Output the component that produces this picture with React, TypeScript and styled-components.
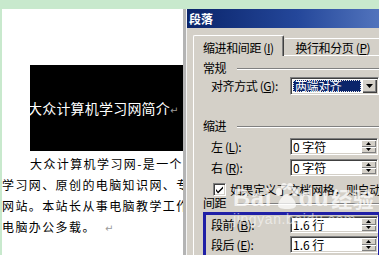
import styled, { createGlobalStyle } from 'styled-components';

const GlobalStyle = createGlobalStyle`
  html, body { margin: 0; padding: 0; background: #fff; }
`;

const cjk = `"Noto Sans CJK SC", "DejaVu Sans", sans-serif`;

const App = () => {
  return (
    <Screen>
      <GlobalStyle />
      <Main>
        <Doc>
          <Banner>
            <BannerTitle>
              大众计算机学习网简介<Mark>↵</Mark>
            </BannerTitle>
          </Banner>
          <Body>
            <Line indent>大众计算机学习网-是一个</Line>
            <Line>学习网、原创的电脑知识网、专</Line>
            <Line>网站。本站长从事电脑教学工作</Line>
            <Line>
              电脑办公多载。<Mark>&nbsp;&nbsp;↵</Mark>
            </Line>
          </Body>
        </Doc>
        <Divider />
        <Dialog>
          <TitleBar>段落</TitleBar>
          <DialogBody>
            <TabRow>
              <Tab active>
                缩进和间距 (<u>I</u>)
              </Tab>
              <Tab>
                换行和分页 (<u>P</u>)
              </Tab>
            </TabRow>
            <Panel>
              <GroupHeader>
                <span>常规</span>
                <Etch />
              </GroupHeader>
              <Row top={2}>
                <Label>
                  对齐方式 (<u>G</u>):
                </Label>
                <Combo>
                  <ComboValue>
                    <Focus>两端对齐</Focus>
                  </ComboValue>
                  <ComboButton>
                    <svg width="7" height="4" viewBox="0 0 7 4">
                      <path d="M0 0h7L3.5 4z" fill="#000" />
                    </svg>
                  </ComboButton>
                </Combo>
              </Row>
              <GroupHeader top={24}>
                <span>缩进</span>
                <Etch />
              </GroupHeader>
              <Row top={5}>
                <Label>
                  左 (<u>L</u>):
                </Label>
                <Spin value="0 字符" />
              </Row>
              <Row top={4}>
                <Label>
                  右 (<u>R</u>):
                </Label>
                <Spin value="0 字符" />
              </Row>
              <CheckRow>
                <CheckBox>
                  <svg width="9" height="9" viewBox="0 0 9 9">
                    <path d="M1 4l2 2.5L8 1.5v2L3 8.5 1 6z" fill="#000" />
                  </svg>
                </CheckBox>
                如果定义了文档网格，则自动调整右缩进
              </CheckRow>
              <GroupHeader>
                <span>间距</span>
                <Etch />
              </GroupHeader>
              <Highlight>
                <Row inner>
                  <Label>
                    段前 (<u>B</u>):
                  </Label>
                  <Spin value="1.6 行" />
                </Row>
                <Row inner top={3}>
                  <Label>
                    段后 (<u>E</u>):
                  </Label>
                  <Spin value="1.6 行" />
                </Row>
              </Highlight>
            </Panel>
          </DialogBody>
        </Dialog>
      </Main>
      <Watermark>
        <Brand>
          <span>Bai</span>
          <svg width="24" height="26" viewBox="0 0 24 26">
            <ellipse cx="5" cy="9" rx="3" ry="4" />
            <ellipse cx="10" cy="3.5" rx="3" ry="3.5" />
            <ellipse cx="16" cy="3.5" rx="3" ry="3.5" />
            <ellipse cx="21" cy="9" rx="3" ry="4" />
            <path d="M13 11c4 0 9 8 9 11s-3 4-9 4-9-1-9-4 5-11 9-11z" />
          </svg>
          <span>du</span>
          <BrandCjk>经验</BrandCjk>
        </Brand>
        <Site>jingyan.baidu.com</Site>
      </Watermark>
    </Screen>
  );
};

const Spin = ({ value }: { value: string }) => (
  <SpinBox>
    <SpinText>{value}</SpinText>
    <SpinButtons>
      <SpinHalf>
        <svg width="5" height="3" viewBox="0 0 5 3">
          <path d="M2.5 0L5 3H0z" fill="#000" />
        </svg>
      </SpinHalf>
      <SpinHalf>
        <svg width="5" height="3" viewBox="0 0 5 3">
          <path d="M0 0h5L2.5 3z" fill="#000" />
        </svg>
      </SpinHalf>
    </SpinButtons>
  </SpinBox>
);

export default App;

const Screen = styled.div`
  position: relative;
  width: 379px;
  height: 255px;
  overflow: hidden;
  background: #c8e9cd;
  padding: 9px 0 0 2px;
  box-sizing: border-box;
`;

const Main = styled.div`
  display: flex;
  height: 246px;
`;

const Doc = styled.div`
  width: 181px;
  flex-shrink: 0;
  background: #fff;
  overflow: hidden;
  padding-top: 56px;
  box-sizing: border-box;
  font-family: ${cjk};
`;

const Banner = styled.div`
  margin-left: 28px;
  width: 170px;
  height: 86px;
  background: #000;
  display: flex;
  align-items: center;
  padding-top: 3px;
  box-sizing: border-box;
`;

const BannerTitle = styled.div`
  margin-left: -2px;
  color: #fff;
  font-size: 14px;
  letter-spacing: 0.2px;
  white-space: nowrap;
  line-height: 18px;
`;

const Mark = styled.span`
  color: #9a9a9a;
  font-family: "DejaVu Sans", sans-serif;
  font-size: 10px;
`;

const Body = styled.div`
  margin-top: 2px;
`;

const Line = styled.div<{ indent?: boolean }>`
  padding-left: ${(p) => (p.indent ? 28 : 0)}px;
  font-size: 12px;
  line-height: 21px;
  letter-spacing: 1.4px;
  color: #000;
  white-space: nowrap;
`;

const Divider = styled.div`
  width: 3px;
  flex-shrink: 0;
  background: #b4b4b4;
  border-right: 1px solid #f4f4f4;
`;

const Dialog = styled.div`
  width: 200px;
  flex-shrink: 0;
  background: #d4d0c8;
  font-family: ${cjk};
  font-size: 12px;
  color: #000;
`;

const TitleBar = styled.div`
  height: 19px;
  line-height: 19px;
  padding-left: 2px;
  color: #fff;
  font-weight: bold;
  font-size: 12px;
  background: linear-gradient(to right, #0a246a 0%, #24479a 55%, #5678c0 100%);
`;

const DialogBody = styled.div`
  padding: 7px 0 0 6px;
`;

const TabRow = styled.div`
  display: flex;
  align-items: flex-end;
  height: 20px;
  position: relative;
  z-index: 1;
`;

const Tab = styled.div<{ active?: boolean }>`
  box-sizing: border-box;
  width: ${(p) => (p.active ? 98 : 110)}px;
  height: ${(p) => (p.active ? 21 : 17)}px;
  margin-bottom: ${(p) => (p.active ? -1 : 0)}px;
  padding: ${(p) => (p.active ? '5px 0 0 9px' : '2px 0 0 11px')};
  line-height: 14px;
  font-size: 12px;
  letter-spacing: -0.4px;
  white-space: nowrap;
  background: #d4d0c8;
  border-top: 1px solid #fff;
  border-left: ${(p) => (p.active ? '1px solid #fff' : 'none')};
  border-right: 1px solid #404040;
  box-shadow: inset -1px 0 #808080;
  border-radius: 2px 2px 0 0;
`;

const Panel = styled.div`
  border-top: 1px solid #fff;
  border-left: 1px solid #fff;
  height: 210px;
  padding: 5px 0 0 9px;
  display: flex;
  flex-direction: column;
`;

const GroupHeader = styled.div<{ top?: number }>`
  display: flex;
  align-items: center;
  gap: 11px;
  height: 14px;
  line-height: 14px;
  margin-top: ${(p) => p.top ?? 0}px;
  letter-spacing: -0.4px;
`;

const Etch = styled.div`
  flex: 1;
  border-top: 1px solid #808080;
  border-bottom: 1px solid #fff;
  margin-top: 2px;
`;

const Row = styled.div<{ top?: number; inner?: boolean }>`
  display: flex;
  align-items: center;
  margin-top: ${(p) => p.top ?? 0}px;
  padding-left: ${(p) => (p.inner ? 5 : 8)}px;
`;

const Label = styled.div`
  width: 79px;
  flex-shrink: 0;
  white-space: nowrap;
  letter-spacing: -0.4px;
  line-height: 16px;
`;

const sunken = `
  box-sizing: border-box;
  border-top: 1px solid #808080;
  border-left: 1px solid #808080;
  border-right: 1px solid #fff;
  border-bottom: 1px solid #fff;
  box-shadow: inset 1px 1px #404040, inset -1px -1px #d4d0c8;
`;

const Combo = styled.div`
  ${sunken}
  width: 89px;
  height: 18px;
  background: #fff;
  display: flex;
  padding: 2px;
`;

const ComboValue = styled.div`
  flex: 1;
  background: #0a246a;
  color: #fff;
  display: flex;
`;

const Focus = styled.div`
  flex: 1;
  border: 1px dotted #e8e8e8;
  line-height: 10px;
  padding-left: 1px;
  font-size: 12px;
  letter-spacing: -0.4px;
  white-space: nowrap;
`;

const ComboButton = styled.div`
  width: 15px;
  margin: -1px -1px -1px 1px;
  background: #d4d0c8;
  box-shadow: inset 1px 1px #fff, inset -1px -1px #404040, inset -2px -2px #808080;
  display: flex;
  align-items: center;
  justify-content: center;
`;

const SpinBox = styled.div`
  ${sunken}
  width: 88px;
  height: 17px;
  background: #fff;
  display: flex;
  padding: 1px;
`;

const SpinText = styled.div`
  flex: 1;
  padding-left: 1px;
  line-height: 13px;
  font-size: 12px;
  white-space: nowrap;
`;

const SpinButtons = styled.div`
  width: 15px;
  display: flex;
  flex-direction: column;
`;

const SpinHalf = styled.div`
  flex: 1;
  background: #d4d0c8;
  box-shadow: inset 1px 1px #fff, inset -1px -1px #808080;
  display: flex;
  align-items: center;
  justify-content: center;
`;

const CheckRow = styled.div`
  display: flex;
  align-items: center;
  gap: 4px;
  margin: 6px 0 0 10px;
  height: 14px;
  white-space: nowrap;
  letter-spacing: -0.4px;
`;

const CheckBox = styled.div`
  ${sunken}
  width: 13px;
  height: 13px;
  flex-shrink: 0;
  background: #fff;
  display: flex;
  align-items: center;
  justify-content: center;
`;

const Highlight = styled.div`
  margin-top: 2px;
  width: 178px;
  box-sizing: border-box;
  border: 3px solid #1f1fa6;
  padding: 1px 0 3px;
`;

const Watermark = styled.div`
  position: absolute;
  left: 233px;
  top: 183px;
  color: rgba(255, 255, 255, 0.72);
  pointer-events: none;
`;

const Brand = styled.div`
  display: flex;
  align-items: flex-end;
  font-family: "Liberation Sans", Arial, sans-serif;
  font-weight: bold;
  font-size: 24px;
  line-height: 26px;
  letter-spacing: 0.5px;

  svg {
    fill: rgba(255, 255, 255, 0.72);
    margin: 0 1px 2px 2px;
  }
`;

const BrandCjk = styled.span`
  font-family: ${cjk};
  font-size: 21px;
  margin-left: 2px;
`;

const Site = styled.div`
  font-family: "Liberation Sans", Arial, sans-serif;
  font-size: 14px;
  line-height: 16px;
  color: rgba(255, 255, 255, 0.55);
  letter-spacing: 0.6px;
`;
